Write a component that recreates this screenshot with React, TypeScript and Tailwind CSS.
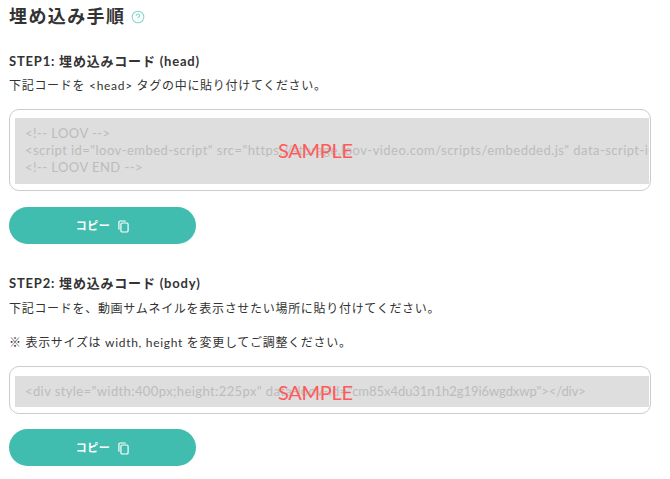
import React from "react";
import { CircleHelp } from "lucide-react";

const font = { fontFamily: '"Lato", "Noto Sans CJK JP", sans-serif' };

const CodeBox = ({ lines, outer, inner, sample }: { lines: React.ReactNode[]; outer: string; inner: string; sample: string }) => (
  <div className={`relative mx-[9px] w-[642px] rounded-[10px] border border-[#cccccc] bg-white pl-[5px] pr-[1px] ${outer}`}>
    <div className={`overflow-hidden whitespace-nowrap bg-[#dedede] pl-[10px] text-[13px] leading-[17px] text-[#bcbcbc] ${inner}`}>
      {lines.map((line, i) => (
        <div key={i}>{line}</div>
      ))}
    </div>
    <span className={`absolute left-[268px] -translate-y-1/2 text-[20px] leading-none tracking-[-0.3px] text-[#ff5a5a] ${sample}`}>SAMPLE</span>
  </div>
);

const CopyButton = ({ className }: { className: string }) => (
  <button className={`mx-[9px] flex h-[37px] w-[187px] items-center justify-center gap-[8px] rounded-full bg-[#40bdae] text-[11px] font-bold tracking-[0.5px] text-white ${className}`}>
    <span className="translate-y-[1px]">コピー</span>
    <svg viewBox="0 0 12 14" className="h-[13px] w-[11px] translate-y-[1px]" fill="none" stroke="currentColor" strokeWidth="1.3">
      <rect x="3.2" y="3.2" width="7.8" height="9.8" rx="1.4" />
      <path d="M1 10V2.4C1 1.6 1.6 1 2.4 1H8" strokeLinecap="round" />
    </svg>
  </button>
);

export default function App() {
  return (
    <div className="h-[479px] w-[670px] overflow-hidden bg-white text-[#333333]" style={font}>
      <div className="mx-[9px] mt-[4px] flex h-[25px] items-center gap-[6px]">
        <h1 className="text-[18px] font-bold leading-[25px] tracking-[1.4px]">埋め込み手順</h1>
        <CircleHelp className="h-[14px] w-[14px] text-[#7fd6cb]" strokeWidth={1.75} />
      </div>

      <h2 className="mx-[9px] mt-[22px] text-[13px] font-bold leading-[20px] tracking-[0.8px]">STEP1: 埋め込みコード (head)</h2>
      <p className="mx-[9px] mt-[5px] text-[12px] leading-[20px] tracking-[0.7px]">下記コードを &lt;head&gt; タグの中に貼り付けてください。</p>

      <CodeBox
        outer="mt-[13px] pb-[6px] pt-[8px]"
        inner="pb-[8px] pt-[7px] tracking-[0.45px]"
        sample="top-[40px]"
        lines={[
          "<!-- LOOV -->",
          '<script id="loov-embed-script" src="https://storage.loov-video.com/scripts/embedded.js" data-script-id="cm85x4du31n1h2g19i6wgdxwp"></script>',
          "<!-- LOOV END -->",
        ]}
      />
      <CopyButton className="mt-[16px]" />

      <h2 className="mx-[9px] mt-[29px] text-[13px] font-bold leading-[20px] tracking-[0.8px]">STEP2: 埋め込みコード (body)</h2>
      <p className="mx-[9px] mt-[6px] text-[12px] leading-[20px] tracking-[0.7px]">下記コードを、動画サムネイルを表示させたい場所に貼り付けてください。</p>
      <p className="mx-[9px] mt-[14px] text-[12px] leading-[20px] tracking-[0.7px]">※ 表示サイズは width, height を変更してご調整ください。</p>

      <CodeBox
        outer="mt-[13px] pb-[6px] pt-[9px]"
        inner="py-[7px] tracking-[0.4px]"
        sample="top-[25px]"
        lines={[
          <>
            {'<div style="width:400px;height:225px" data-loov-id='}
            <span className="tracking-[-0.05px]">{'"cm85x4du31n1h2g19i6wgdxwp"></div>'}</span>
          </>,
        ]}
      />
      <CopyButton className="mt-[15px]" />
    </div>
  );
}
